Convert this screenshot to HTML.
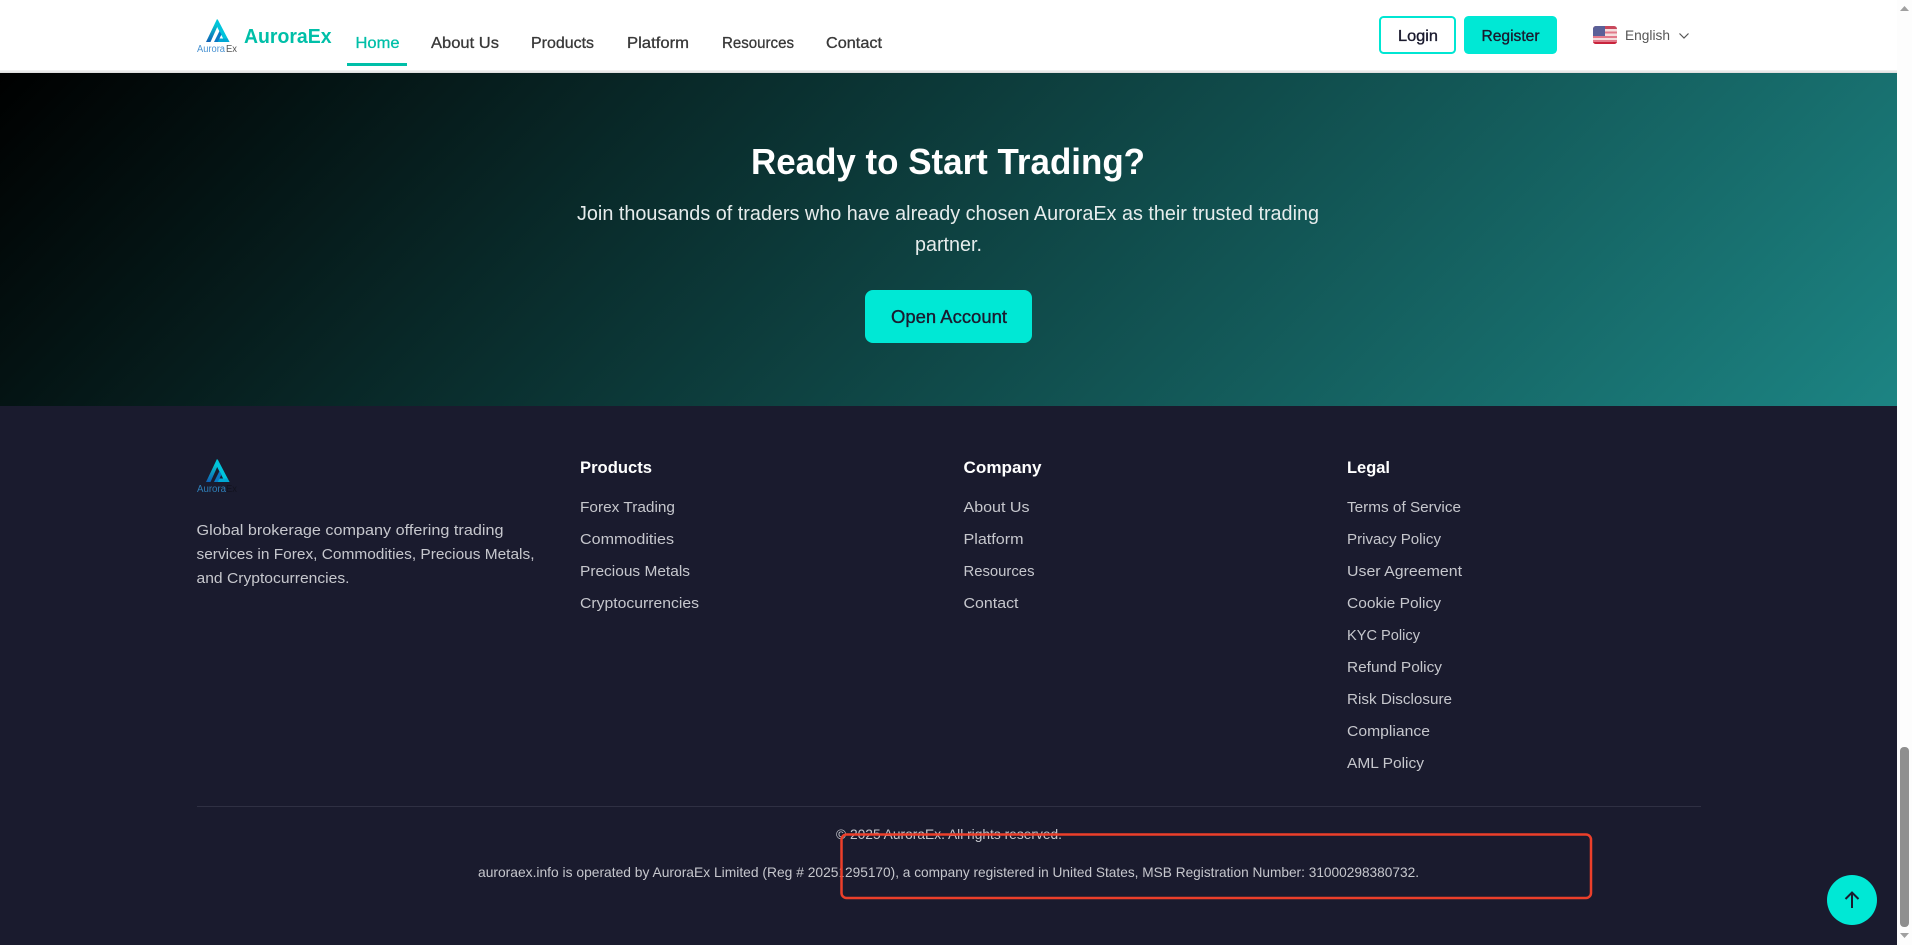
<!DOCTYPE html>
<html lang="en">
<head>
<meta charset="utf-8">
<title>AuroraEx</title>
<style>
html,body{margin:0;padding:0;width:1912px;height:945px;overflow:hidden;background:#1a1b2e}
svg{display:block}
text{font-family:"Liberation Sans",Arial,sans-serif;white-space:pre}
.nav{font-size:16px;fill:#383838;stroke:#383838;stroke-width:.3}
.btn{font-size:16px;fill:#1a1a2e;stroke:#1a1a2e;stroke-width:.35}
.fh{font-size:17px;font-weight:700;fill:#fff}
.fl{font-size:15px;fill:#c6c7cd}
.sm{font-size:14px;fill:#c6c7cd}
.hp{font-size:20px;fill:#e6ecec}
</style>
</head>
<body>
<svg xmlns="http://www.w3.org/2000/svg" width="1912" height="945" viewBox="0 0 1912 945">
<defs>
<linearGradient id="hero" gradientUnits="userSpaceOnUse" x1="391" y1="-318" x2="1506" y2="797">
<stop offset="0" stop-color="#000"/><stop offset="1" stop-color="#1c8483"/>
</linearGradient>
<linearGradient id="lg" x1="0" y1="0" x2="0" y2="1">
<stop offset="0" stop-color="#00e8d8"/><stop offset="1" stop-color="#1060b4"/>
</linearGradient>
<linearGradient id="shadow" x1="0" y1="0" x2="0" y2="1">
<stop offset="0" stop-color="#f4f4f4"/><stop offset="1" stop-color="#dcdcdc"/>
</linearGradient>
<g id="tri">
<path d="M217 19 L206 42 H210.5 L217 27.5Z" fill="url(#lg)"/>
<path d="M217.5 19 L229.5 42 H225 L215.3 23.5Z" fill="#00c4dc"/>
<path d="M216 42 H229.5 L227.6 38.5 H218Z" fill="#00a8d4"/>
<path d="M214 42 L219.5 31 L221.5 34.5 L217.8 42Z" fill="#0a78c4"/>
</g>
</defs>

<!-- page -->
<rect width="1912" height="945" fill="#1a1b2e"/>

<!-- header -->
<rect width="1897" height="70" fill="#fff"/>
<rect y="70" width="1897" height="3" fill="url(#shadow)"/>
<use href="#tri"/>
<text x="197" y="52" font-size="10" fill="#4a93d2" textLength="28" lengthAdjust="spacingAndGlyphs">Aurora</text>
<text x="226" y="52" font-size="10" fill="#555" textLength="11" lengthAdjust="spacingAndGlyphs">Ex</text>
<text x="244" y="43" font-size="20" font-weight="700" fill="#00bfa8" textLength="87.5" lengthAdjust="spacingAndGlyphs">AuroraEx</text>

<text x="355.5" y="48" class="nav" style="fill:#00bfa8;stroke:#00bfa8" textLength="44" lengthAdjust="spacingAndGlyphs">Home</text>
<text x="431" y="48" class="nav" textLength="68" lengthAdjust="spacingAndGlyphs">About Us</text>
<text x="531" y="48" class="nav" textLength="63" lengthAdjust="spacingAndGlyphs">Products</text>
<text x="627" y="48" class="nav" textLength="62" lengthAdjust="spacingAndGlyphs">Platform</text>
<text x="722" y="48" class="nav" textLength="72" lengthAdjust="spacingAndGlyphs">Resources</text>
<text x="826" y="48" class="nav" textLength="56" lengthAdjust="spacingAndGlyphs">Contact</text>
<rect x="347" y="63" width="60" height="3" fill="#00bfa8"/>

<rect x="1380" y="17" width="75" height="36" rx="3.5" fill="#fff" stroke="#00e6d3" stroke-width="2"/>
<text x="1398" y="41" class="btn" textLength="40" lengthAdjust="spacingAndGlyphs">Login</text>
<rect x="1464" y="16" width="93" height="38" rx="4.5" fill="#00e8d5"/>
<text x="1481.5" y="41" class="btn" textLength="58" lengthAdjust="spacingAndGlyphs">Register</text>

<!-- flag -->
<g>
<rect x="1593" y="26" width="24" height="18" rx="3" fill="#f4dede"/>
<path d="M1596 26H1614a3 3 0 0 1 3 3H1593a3 3 0 0 1 3-3Z" fill="#c8485c"/>
<rect x="1593" y="31.5" width="24" height="2" fill="#e2798a"/>
<rect x="1593" y="36" width="24" height="2" fill="#e2798a"/>
<rect x="1593" y="40" width="24" height="2" fill="#e2798a"/>
<path d="M1593 42H1617a3 3 0 0 1-3 2H1596a3 3 0 0 1-3-2Z" fill="#c8243c"/>
<path d="M1596 26H1605V36H1593V29a3 3 0 0 1 3-3Z" fill="#5a6098"/>
</g>
<text x="1625" y="40" font-size="14" fill="#555" textLength="45" lengthAdjust="spacingAndGlyphs">English</text>
<path d="M1679.5 33.5 L1684 38 L1688.5 33.5" fill="none" stroke="#555" stroke-width="1.2"/>

<!-- hero -->
<rect y="73" width="1897" height="333" fill="url(#hero)"/>
<text x="751" y="174" font-size="36" font-weight="700" fill="#fff" textLength="394" lengthAdjust="spacingAndGlyphs">Ready to Start Trading?</text>
<text x="577" y="220" class="hp" textLength="742" lengthAdjust="spacingAndGlyphs">Join thousands of traders who have already chosen AuroraEx as their trusted trading</text>
<text x="915" y="251" class="hp" textLength="67" lengthAdjust="spacingAndGlyphs">partner.</text>
<rect x="865" y="290" width="167" height="53" rx="8" fill="#00e8d5"/>
<text x="891" y="323" font-size="18" fill="#1a1a2e" stroke="#1a1a2e" stroke-width=".35" textLength="116" lengthAdjust="spacingAndGlyphs">Open Account</text>

<!-- footer brand -->
<use href="#tri" y="440"/>
<text x="197" y="492" font-size="10" fill="#2f7fb8" textLength="29" lengthAdjust="spacingAndGlyphs">Aurora</text>
<text x="226" y="492" font-size="10" fill="#12131f" textLength="11" lengthAdjust="spacingAndGlyphs">Ex</text>
<text x="196.5" y="535" class="fl" textLength="307" lengthAdjust="spacingAndGlyphs">Global brokerage company offering trading</text>
<text x="196.5" y="559" class="fl" textLength="338" lengthAdjust="spacingAndGlyphs">services in Forex, Commodities, Precious Metals,</text>
<text x="196.5" y="583" class="fl" textLength="153" lengthAdjust="spacingAndGlyphs">and Cryptocurrencies.</text>

<!-- footer products -->
<text x="580" y="473" class="fh" textLength="72" lengthAdjust="spacingAndGlyphs">Products</text>
<text x="580" y="512" class="fl" textLength="95" lengthAdjust="spacingAndGlyphs">Forex Trading</text>
<text x="580" y="544" class="fl" textLength="94" lengthAdjust="spacingAndGlyphs">Commodities</text>
<text x="580" y="576" class="fl" textLength="110" lengthAdjust="spacingAndGlyphs">Precious Metals</text>
<text x="580" y="608" class="fl" textLength="119" lengthAdjust="spacingAndGlyphs">Cryptocurrencies</text>

<!-- footer company -->
<text x="963.5" y="473" class="fh" textLength="78" lengthAdjust="spacingAndGlyphs">Company</text>
<text x="963.5" y="512" class="fl" textLength="66" lengthAdjust="spacingAndGlyphs">About Us</text>
<text x="963.5" y="544" class="fl" textLength="60" lengthAdjust="spacingAndGlyphs">Platform</text>
<text x="963.5" y="576" class="fl" textLength="71" lengthAdjust="spacingAndGlyphs">Resources</text>
<text x="963.5" y="608" class="fl" textLength="55" lengthAdjust="spacingAndGlyphs">Contact</text>

<!-- footer legal -->
<text x="1347" y="473" class="fh" textLength="43" lengthAdjust="spacingAndGlyphs">Legal</text>
<text x="1347" y="512" class="fl" textLength="114" lengthAdjust="spacingAndGlyphs">Terms of Service</text>
<text x="1347" y="544" class="fl" textLength="94" lengthAdjust="spacingAndGlyphs">Privacy Policy</text>
<text x="1347" y="576" class="fl" textLength="115" lengthAdjust="spacingAndGlyphs">User Agreement</text>
<text x="1347" y="608" class="fl" textLength="94" lengthAdjust="spacingAndGlyphs">Cookie Policy</text>
<text x="1347" y="640" class="fl" textLength="73" lengthAdjust="spacingAndGlyphs">KYC Policy</text>
<text x="1347" y="672" class="fl" textLength="95" lengthAdjust="spacingAndGlyphs">Refund Policy</text>
<text x="1347" y="704" class="fl" textLength="105" lengthAdjust="spacingAndGlyphs">Risk Disclosure</text>
<text x="1347" y="736" class="fl" textLength="83" lengthAdjust="spacingAndGlyphs">Compliance</text>
<text x="1347" y="768" class="fl" textLength="77" lengthAdjust="spacingAndGlyphs">AML Policy</text>

<!-- footer bottom -->
<rect x="197" y="806" width="1504" height="1" fill="#2f3043"/>
<text x="836" y="839" class="sm" textLength="226" lengthAdjust="spacingAndGlyphs">© 2025 AuroraEx. All rights reserved.</text>
<text x="478" y="877" class="sm" textLength="360.5" lengthAdjust="spacingAndGlyphs">auroraex.info is operated by AuroraEx Limited (Reg # 2025</text>
<text x="839" y="877" class="sm" textLength="5" lengthAdjust="spacingAndGlyphs">1</text>
<text x="845" y="877" class="sm" textLength="574" lengthAdjust="spacingAndGlyphs">295170), a company registered in United States, MSB Registration Number: 31000298380732.</text>

<!-- annotation -->
<rect x="841.5" y="834.5" width="749.5" height="63.5" rx="5" fill="none" stroke="#ec3f2a" stroke-width="2.5"/>

<!-- back to top -->
<circle cx="1852" cy="900" r="25" fill="#00e8d5"/>
<path d="M1852 908 V892.5 M1845.5 899 L1852 892.5 L1858.5 899" fill="none" stroke="#1a1a2e" stroke-width="2"/>

<!-- scrollbar -->
<rect x="1897" width="15" height="945" fill="#fdfdfd"/>
<path d="M1900 11 L1904.5 6 L1909 11Z" fill="#a0a0a0"/>
<rect x="1900" y="747" width="9" height="180" rx="4" fill="#8f8f8f"/>
<path d="M1900 933 L1904.5 938 L1909 933Z" fill="#a0a0a0"/>
</svg>
</body>
</html>
